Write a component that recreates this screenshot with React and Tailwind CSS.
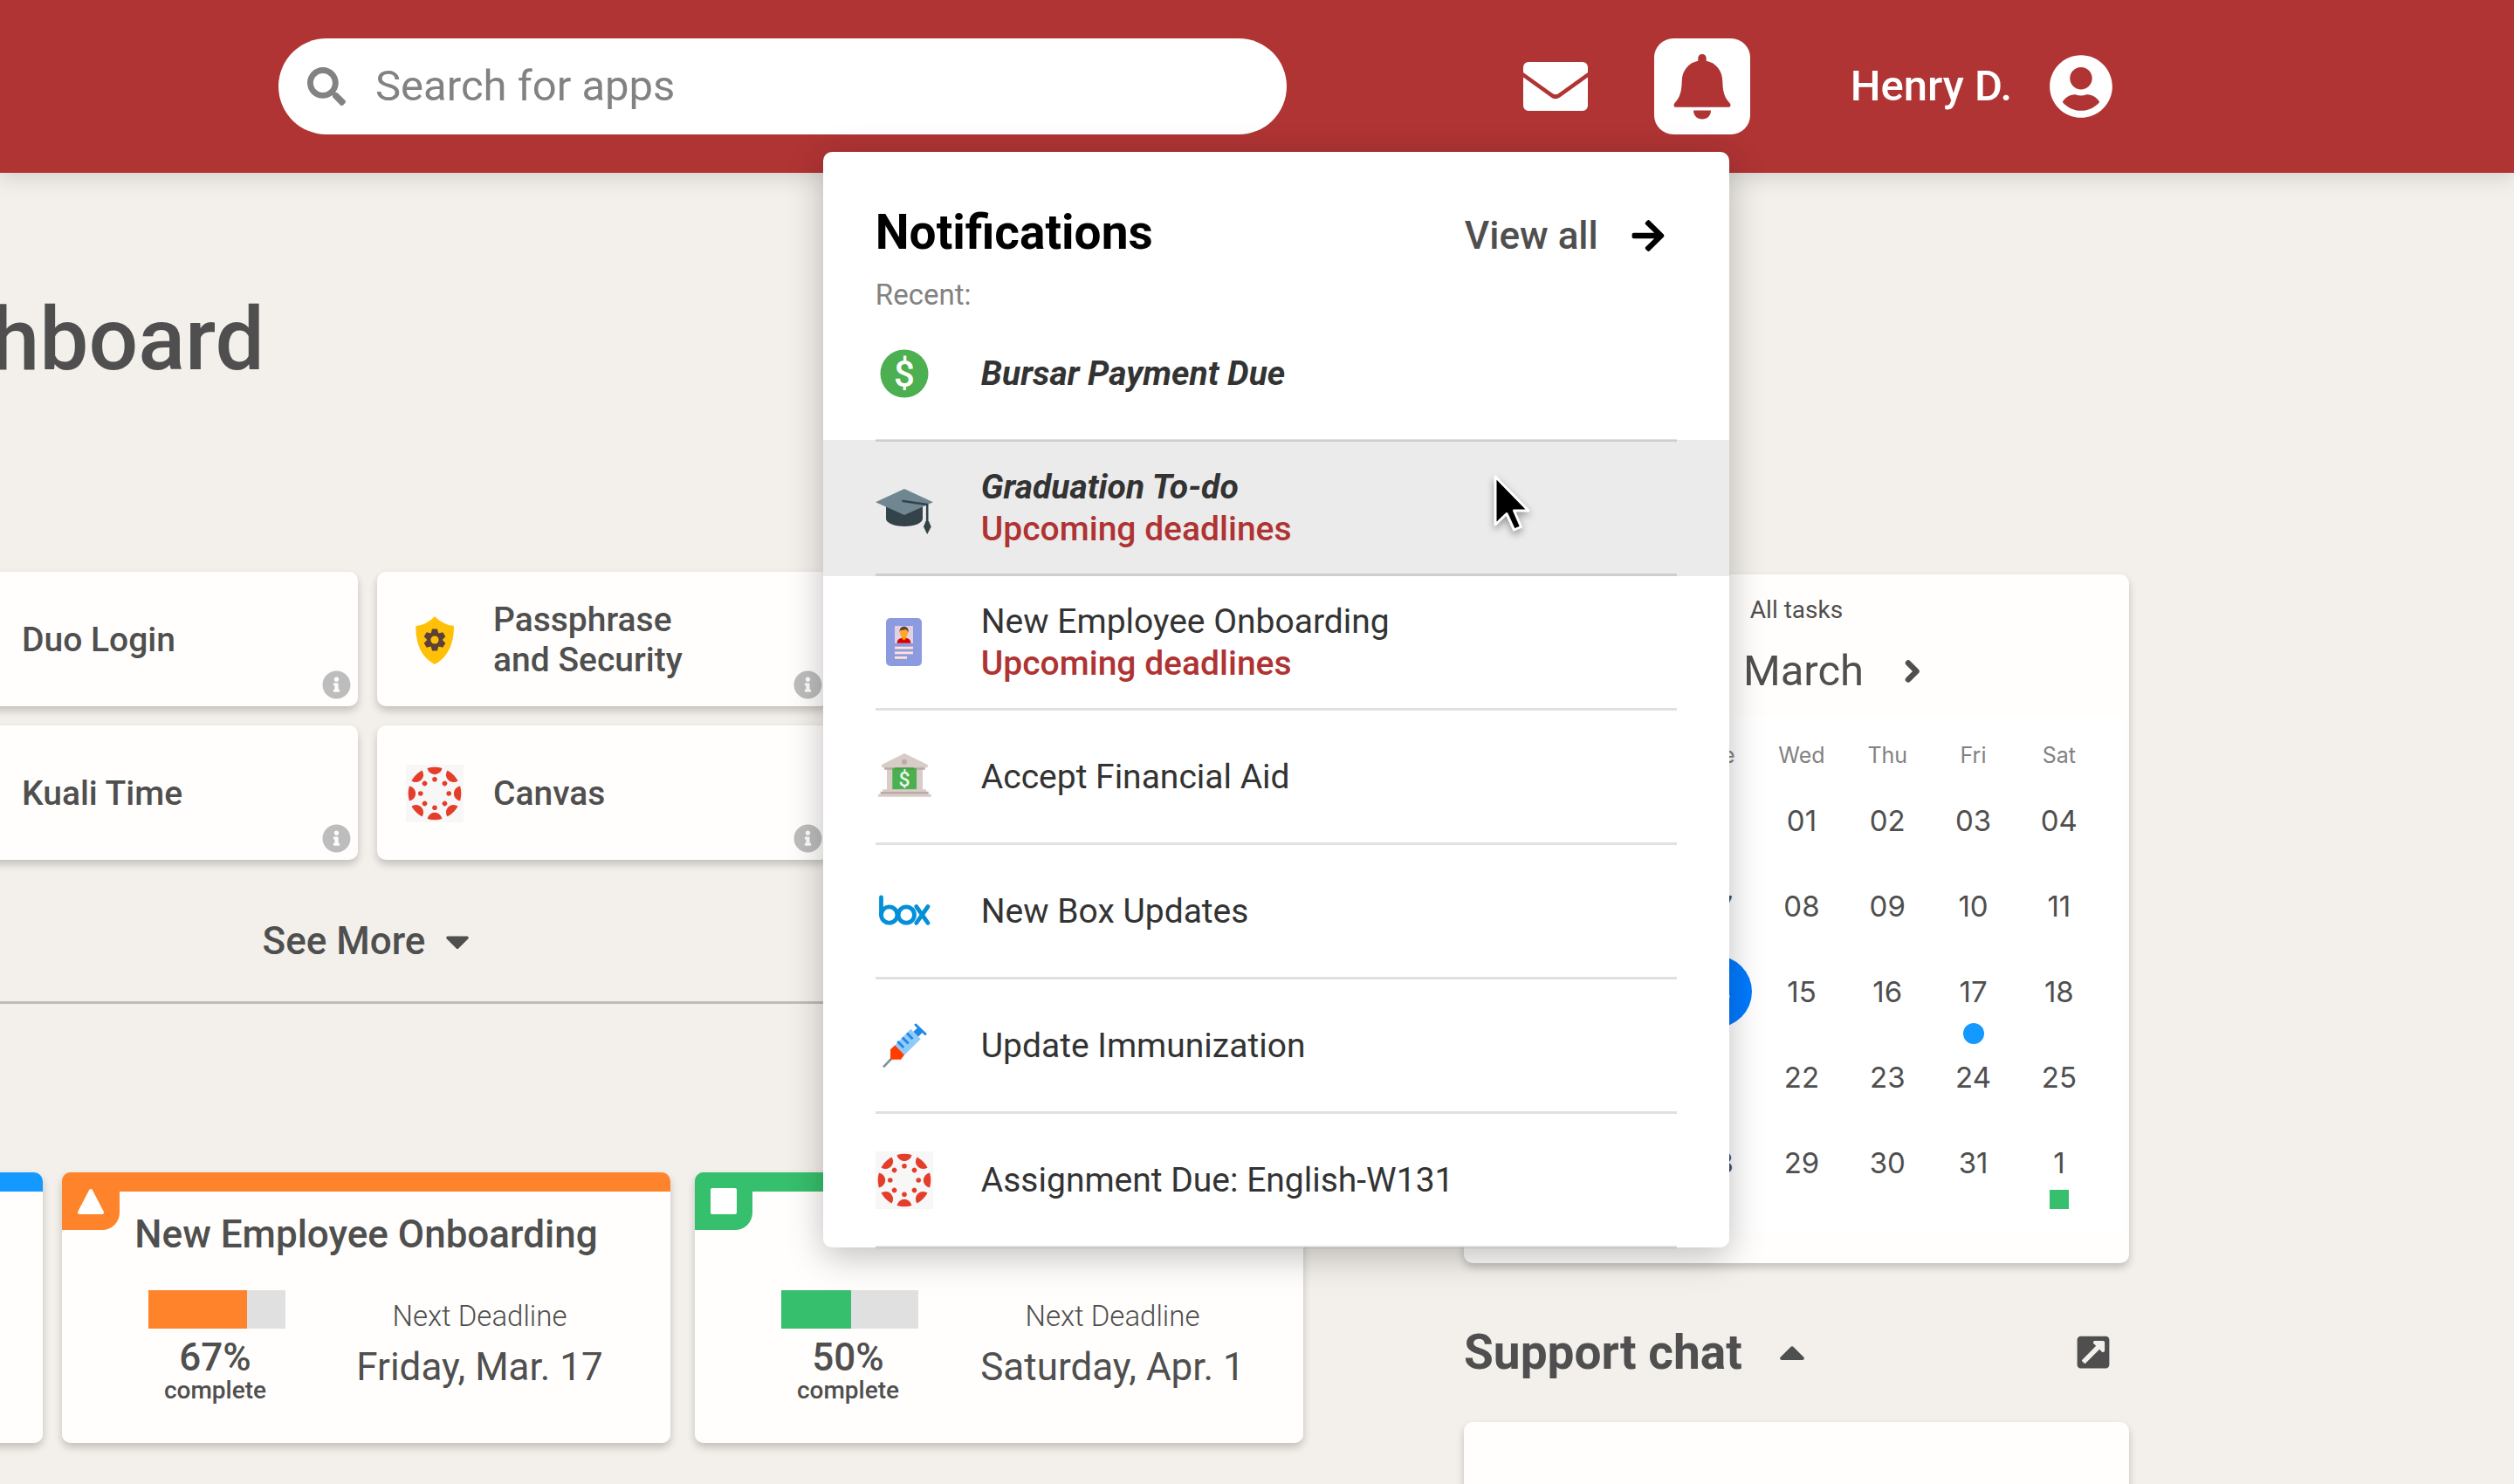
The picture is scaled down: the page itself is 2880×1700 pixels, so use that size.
import React from "react";
import {
  FaSearch,
  FaArrowRight,
  FaUserCircle,
  FaInfoCircle,
  FaCaretDown,
  FaCaretUp,
  FaExternalLinkSquareAlt,
} from "react-icons/fa";

/* ---------- icons ---------- */

function MailIcon() {
  return (
    <svg viewBox="0 0 74 56" className="h-14 w-[74px]" fill="currentColor" aria-hidden="true">
      <path d="M0 12V6a6 6 0 0 1 6-6h62a6 6 0 0 1 6 6v6L40.500 36q-3.500 2.500-7 0z" />
      <path d="M0 17.500 32 40.500q5 3.500 10 0L74 17.500V50a6 6 0 0 1-6 6H6a6 6 0 0 1-6-6z" />
    </svg>
  );
}

function BellIcon() {
  return (
    <svg viewBox="0 0 66 75" className="h-[75px] w-[66px]" fill="currentColor" aria-hidden="true">
      <path d="M33 0c2.700 0 4.700 2 4.700 4.700v3.100C49 10 56 19 56.300 31c.3 11 1.700 16.500 5.700 22 2 2.600 3.500 3.800 3.500 5.400 0 1.500-1 2.400-2.700 2.400H3.200c-1.700 0-2.700-.9-2.700-2.400 0-1.600 1.500-2.800 3.500-5.400 4-5.500 5.400-11 5.700-22C10 19 17 10 28.300 7.800V4.700C28.300 2 30.300 0 33 0z" />
      <path d="M23 64.500h20C43 70.500 38.800 74.500 33 74.500S23 70.500 23 64.500z" />
    </svg>
  );
}

function ChevronIcon({ flip }) {
  return (
    <svg
      viewBox="0 0 20 30"
      className={flip ? "h-[30px] w-5 rotate-180" : "h-[30px] w-5"}
      fill="none"
      stroke="currentColor"
      strokeWidth="6.500"
      strokeLinecap="round"
      strokeLinejoin="round"
      aria-hidden="true"
    >
      <path d="M5 5.500 14.500 15 5 24.500" />
    </svg>
  );
}

function MoneyIcon() {
  return (
    <svg viewBox="0 0 66 66" className="size-[66px] shrink-0" aria-hidden="true">
      <circle cx="33" cy="33" r="27.500" fill="#4caf50" />
      <text x="33" y="48" textAnchor="middle" fill="#fff" fontFamily="Roboto, sans-serif" fontWeight="500" fontSize="42">$</text>
    </svg>
  );
}

function GraduationIcon() {
  return (
    <svg viewBox="0 0 66 66" className="size-[66px] shrink-0" aria-hidden="true">
      <path d="M12 30h42v15c0 5-9 9-21 9s-21-4-21-9z" fill="#34434a" />
      <path d="M33 11 66 26.300 33 41 0 26.300z" fill="#708690" />
      <path d="M31.500 25 59.200 29v21" fill="none" stroke="#34434a" strokeWidth="2.600" strokeLinecap="round" strokeLinejoin="round" />
      <path d="M57.500 48h3.500l2.700 6.500L59.200 63 55 54.500z" fill="#34434a" />
    </svg>
  );
}

function BadgeIcon() {
  return (
    <svg viewBox="0 0 66 66" className="size-[66px] shrink-0" aria-hidden="true">
      <rect x="12" y="5" width="41" height="55" rx="5" fill="#8c9ae0" />
      <rect x="22" y="14" width="21" height="20" fill="#e1d1e2" />
      <path d="M24.700 33.700c0-4 3-6.200 7.800-6.200s7.800 2.200 7.800 6.200z" fill="#d50000" />
      <path d="M30 25h5.200v3.500l-2.600 2-2.600-2z" fill="#ff9800" />
      <ellipse cx="32.600" cy="21.500" rx="4.600" ry="5.600" fill="#ffa726" />
      <path d="M27.700 21.500c-.4-4.500 1.600-6.700 5-6.700s5.400 2.200 5 6.700c-.8-2-2-3-3.500-3.600-1.700 1-4.700.8-5.500 1.200-.6.600-.8 1.300-1 2.400z" fill="#5d4037" />
      <path d="M22 37.700h21v2.700H22zM22 43.400h21v2.800H22zM22 49h14v2.800H22z" fill="#ffe3d6" />
    </svg>
  );
}

function BankIcon() {
  return (
    <svg viewBox="0 0 66 66" className="size-[66px] shrink-0" aria-hidden="true">
      <path d="M13 24h41v24H13z" fill="#d7ccc8" />
      <path d="M10 22h46.700v2.700H10z" fill="#bcaaa4" />
      <path d="M33 6 59.700 19v3.300H7V19z" fill="#d7ccc8" />
      <circle cx="33" cy="15.700" r="3" fill="#bcaaa4" />
      <path d="M19.300 23H47v24.500H19.300z" fill="#4caf50" />
      <path d="M22 22.300h22v2.400H22z" fill="#43a047" />
      <text x="33" y="44" textAnchor="middle" fill="#e8f5e9" fontFamily="Roboto, sans-serif" fontWeight="500" fontSize="23">$</text>
      <path d="M8.300 47.300H58v2.500H8.300zM3 52.700h60.700v3H3z" fill="#d7ccc8" />
      <path d="M5.700 49.700h55v3h-55z" fill="#bcaaa4" />
    </svg>
  );
}

function BoxIcon() {
  return (
    <svg viewBox="0 0 66 66" className="size-[66px] shrink-0" fill="none" stroke="#0490d9" strokeWidth="4.800" strokeLinecap="round" aria-label="box">
      <path d="M6.500 17v20" />
      <circle cx="15.700" cy="37" r="9.200" />
      <circle cx="35.300" cy="37" r="9.200" />
      <path d="M46.700 27.500 60 46.300M60 27.500 46.700 46.300" />
    </svg>
  );
}

function SyringeIcon() {
  return (
    <svg viewBox="0 0 66 66" className="size-[66px] shrink-0" aria-hidden="true">
      <path d="M9 57.300 19 47" stroke="#78909c" strokeWidth="2.600" />
      <path d="m43.300 17 5.400-5.300 5.500 5.600-5.200 5.400z" fill="#1e88e5" />
      <path d="m46 9 11 10.500" stroke="#1e88e5" strokeWidth="3" strokeLinecap="round" />
      <path d="M22.300 32.300 40.300 13.700 51.700 25.300 33 43.800z" fill="#90caf9" />
      <path d="M17 37.300l5.300-5L33 43.500l-4 5.200H17z" fill="#ff3d00" />
      <path d="m25.200 28 7 7m-1.500-11.500 7 7M36 18.500l6.500 6.700" stroke="#1e88e5" strokeWidth="2.800" />
    </svg>
  );
}

function CanvasIcon() {
  const angles = [0, 45, 90, 135, 180, 225, 270, 315];
  return (
    <svg viewBox="-33 -33 66 66" className="size-[66px] shrink-0 bg-[#f7f7f7]" fill="#e43e2b" aria-hidden="true">
      {angles.map((a) => (
        <g key={a} transform={`rotate(${a})`}>
          <path d="M-8.500-29.100A30.300 30.300 0 0 1 8.500-29.100A8.600 8.600 0 0 1-8.500-29.100z" />
          <circle cx="0" cy="-16.200" r="2.800" />
        </g>
      ))}
    </svg>
  );
}

function ShieldIcon() {
  return (
    <svg viewBox="0 0 66 66" className="size-[66px] shrink-0" aria-hidden="true">
      <path d="M33 6C27.500 12 19 16.700 11.300 17c0 19 5.200 35 21.700 44 16.500-9 22-25 22-44C47 16.700 38.500 12 33 6z" fill="#ffc107" />
      <g fill="#5d4037">
        {[0, 60, 120].map((a) => (
          <path key={a} d="M30 20.500h6l1.500 6v13l-1.500 6h-6l-1.500-6v-13z" transform={`rotate(${a} 33 33)`} />
        ))}
        <circle cx="33" cy="33" r="9" />
      </g>
      <circle cx="33" cy="33" r="4.600" fill="#ffc107" />
    </svg>
  );
}

function Cursor() {
  return (
    <svg
      viewBox="0 0 48 72"
      className="pointer-events-none absolute top-[367px] left-[766px] h-[72px] w-12 drop-shadow-[0_4px_4px_rgba(0,0,0,0.35)]"
      aria-hidden="true"
    >
      <path d="M4 5v55l13-12.500L25.500 66l8-3.500L25.500 44H42z" fill="#000" stroke="#fff" strokeWidth="3" strokeLinejoin="round" />
    </svg>
  );
}

/* ---------- notifications ---------- */

const notifications = [
  { title: "Bursar Payment Due", Icon: MoneyIcon, unread: true },
  { title: "Graduation To-do", Icon: GraduationIcon, unread: true, note: true, active: true },
  { title: "New Employee Onboarding", Icon: BadgeIcon, note: true },
  { title: "Accept Financial Aid", Icon: BankIcon },
  { title: "New Box Updates", Icon: BoxIcon },
  { title: "Update Immunization", Icon: SyringeIcon },
  { title: "Assignment Due: English-W131", Icon: CanvasIcon },
];

function NotificationsPanel() {
  return (
    <section
      aria-label="Notifications"
      className="absolute top-[130px] right-6 w-[1038px] rounded-[10px] bg-white pt-[60px] text-[#333] shadow-[0_10px_40px_rgba(0,0,0,0.25)]"
    >
      <div className="flex items-baseline justify-between pr-[72px] pl-[60px]">
        <h2 className="text-[55px] leading-[64px] font-bold text-black">Notifications</h2>
        <a href="#all" className="flex items-center gap-9 text-[44px] leading-[52px] font-medium text-[#4f4f4f]">
          View all
          <FaArrowRight className="size-[42px] text-black" />
        </a>
      </div>
      <p className="mt-7 px-[60px] text-[33px] leading-6 text-[#828282]">Recent:</p>
      <ul className="mt-0.5 -mb-px">
        {notifications.map(({ title, Icon, unread, note, active }) => (
          <li key={title} className={active ? "relative -mt-0.5 bg-black/8 px-[60px] pt-0.5" : "px-[60px]"}>
            <a href="#notification" className="flex h-[154px] items-center gap-[55px] border-b-[3px] border-black/12">
              <Icon />
              <span className="flex flex-col text-[39px] leading-[48px]">
                <span className={unread ? "font-bold italic" : ""}>{title}</span>
                {note && <span className="font-medium text-[#b03333]">Upcoming deadlines</span>}
              </span>
            </a>
          </li>
        ))}
      </ul>
      <Cursor />
    </section>
  );
}

/* ---------- header ---------- */

function Header() {
  return (
    <header className="relative z-10 flex h-[198px] items-center bg-[#b03434] pr-[459px] pl-[319px] shadow-[0_4px_24px_rgba(0,0,0,0.15)]">
      <label className="flex h-[110px] flex-1 items-center gap-[34px] rounded-full bg-white pl-[33px]">
        <FaSearch className="size-11 shrink-0 text-[#828282]" />
        <input
          type="search"
          aria-label="Search for apps"
          placeholder="Search for apps"
          className="min-w-0 flex-1 bg-transparent text-[49px] text-[#4f4f4f] outline-none placeholder:text-[#828282]"
        />
      </label>
      <button type="button" aria-label="Messages" className="ml-[271px] text-white">
        <MailIcon />
      </button>
      <div className="relative ml-[76px]">
        <button type="button" aria-label="Notifications" className="flex size-[110px] items-center justify-center rounded-[22px] bg-white text-[#b03434]">
          <BellIcon />
        </button>
        <NotificationsPanel />
      </div>
      <button type="button" className="ml-[115px] flex items-center gap-[42px] text-[49px] font-medium text-white">
        Henry D.
        <FaUserCircle className="size-[74px]" />
      </button>
    </header>
  );
}

/* ---------- left column ---------- */

const apps = [
  [
    { name: "One.IU" },
    { name: "Duo Login" },
    { name: "Passphrase and Security", Icon: ShieldIcon },
    { name: "Outlook" },
  ],
  [
    { name: "Student Center" },
    { name: "Kuali Time" },
    { name: "Canvas", Icon: CanvasIcon },
    { name: "Zoom" },
  ],
];

function AppTile({ name, Icon }) {
  return (
    <div className="relative h-[154px] w-[518px] shrink-0 rounded-[10px] bg-[#fffefc] shadow-[0_5px_10px_rgba(0,0,0,0.2)]">
      <a href="#app" className="flex h-full items-center gap-[34px] pt-0.5 pr-[120px] pl-[33px] text-[39px] leading-[46px] font-medium text-[#4f4f4f]">
        {Icon ? <Icon /> : <span className="size-[66px] shrink-0" />}
        <span>{name}</span>
      </a>
      <button type="button" aria-label={"About " + name} className="absolute right-2 bottom-2 text-[#bdbdbd]">
        <FaInfoCircle className="size-[33px]" />
      </button>
    </div>
  );
}

const tones = {
  blue: "bg-[#1399ff]",
  orange: "bg-[#ff832b]",
  green: "bg-[#36bf6c]",
};

function TaskCard({ title, tone, shape, percent, fill, date }) {
  return (
    <article className="relative min-w-0 flex-1 overflow-hidden rounded-[10px] bg-[#fffefc] text-[#4f4f4f]">
      <div className={"h-[22px] " + tones[tone]} />
      <div className={"absolute top-0 left-0 flex size-[66px] items-center justify-center rounded-br-[20px] " + tones[tone]}>
        <svg viewBox="0 0 30 30" className="size-[30px]" fill="#fff" stroke="#fff" strokeWidth="4" strokeLinejoin="round" aria-hidden="true">
          {shape === "triangle" && <path d="M15 3 28 28H2z" />}
          {shape === "square" && <path d="M2 2h26v26H2z" />}
          {shape === "circle" && <circle cx="15" cy="15" r="12" />}
        </svg>
      </div>
      <h3 className="mt-[23px] text-center text-[44px] leading-[52px] font-medium whitespace-nowrap">{title}</h3>
      <div className="mt-[38px] flex gap-1 pb-[46px] pl-[99px]">
        <div className="w-[157px] text-center font-medium">
          <div className="h-11 bg-[#e0e0e0]">
            <div className={"h-full " + tones[tone]} style={{ width: fill + "%" }} />
          </div>
          <p className="mt-[9px] pr-1 text-[44px] leading-[48px]">{percent}%</p>
          <p className="pr-1 text-[28px] leading-7">complete</p>
        </div>
        <div className="flex-1 pt-[10px] text-center">
          <p className="text-[33px] leading-10 font-light">Next Deadline</p>
          <p className="mt-3 text-[44px] leading-[52px]">{date}</p>
        </div>
      </div>
    </article>
  );
}

function LeftColumn() {
  const card = "flex min-w-0 rounded-[10px] shadow-[0_5px_10px_rgba(0,0,0,0.2)]";
  return (
    <div className="min-w-0 flex-1">
      <h1 className="pl-[471px] text-[100px] leading-[120px] font-medium text-[#4f4f4f]">Dashboard</h1>
      <div className="mt-[206px] mr-[3px] flex flex-col gap-[22px]">
        {apps.map((row, i) => (
          <div key={i} className="flex justify-end gap-[22px]">
            {row.map((app) => (
              <AppTile key={app.name} {...app} />
            ))}
          </div>
        ))}
      </div>
      <button type="button" className="mx-auto mt-[67px] flex items-center gap-[15px] pl-[6px] text-[44px] leading-[52px] font-medium text-[#4f4f4f]">
        See More
        <FaCaretDown className="size-11" />
      </button>
      <hr className="mt-[43px] border-t-[3px] border-[#bdbdbd]" />
      <div className="mt-[193px] flex gap-[22px]">
        <div className={card + " w-[701px]"}>
          <TaskCard title="Enrollment" tone="blue" shape="circle" percent="33" fill={33} date="Friday, Mar. 17" />
        </div>
        <div className="flex min-w-0 flex-1 gap-7">
          <div className={card + " flex-1"}>
            <TaskCard title="New Employee Onboarding" tone="orange" shape="triangle" percent="67" fill={72} date="Friday, Mar. 17" />
          </div>
          <div className={card + " flex-1"}>
            <TaskCard title="Graduation To-do" tone="green" shape="square" percent="50" fill={51} date="Saturday, Apr. 1" />
          </div>
        </div>
      </div>
    </div>
  );
}

/* ---------- right column ---------- */

const weekdays = ["Sun", "Mon", "Tue", "Wed", "Thu", "Fri", "Sat"];
const weeks = [
  ["", "", "", "01", "02", "03", "04"],
  ["05", "06", "07", "08", "09", "10", "11"],
  ["12", "13", "14", "15", "16", "17", "18"],
  ["19", "20", "21", "22", "23", "24", "25"],
  ["26", "27", "28", "29", "30", "31", "1"],
];

function Day({ day }) {
  if (day === "14") {
    return <span className="mx-auto flex size-[82px] items-center justify-center rounded-full bg-[#007aff] text-white">14</span>;
  }
  return (
    <span className="relative inline-block">
      {day}
      {day === "17" && <span className="absolute top-full left-1/2 mt-4 size-6 -translate-x-1/2 rounded-full bg-[#1399ff]" />}
      {day === "1" && <span className="absolute top-full left-1/2 mt-[11px] size-[22px] -translate-x-1/2 bg-[#36bf6c]" />}
    </span>
  );
}

function Calendar() {
  return (
    <section className="rounded-[10px] bg-[#fffefc] px-2 pt-[25px] pb-9 text-[#4f4f4f] shadow-[0_5px_10px_rgba(0,0,0,0.2)]">
      <p className="text-center text-[28px] leading-8">All tasks</p>
      <div className="mt-[26px] flex items-center justify-center gap-[46px] pl-4">
        <button type="button" aria-label="Previous month">
          <ChevronIcon flip />
        </button>
        <h2 className="text-[49px] leading-[56px]">March</h2>
        <button type="button" aria-label="Next month">
          <ChevronIcon />
        </button>
      </div>
      <div className="mt-[22px] bg-white pt-[22px] pr-[23px] pb-[30px] pl-[35px]">
        <table className="w-full table-fixed text-center font-[Inter,sans-serif]">
          <thead>
            <tr className="h-[50px] text-[25px] text-[#828282]">
              {weekdays.map((d) => (
                <th key={d} scope="col" className="p-0 font-normal">{d}</th>
              ))}
            </tr>
          </thead>
          <tbody className="text-[33px] leading-10">
            {weeks.map((week, i) => (
              <tr key={i} className="h-[98px]">
                {week.map((day, j) => (
                  <td key={j} className="p-0">{day && <Day day={day} />}</td>
                ))}
              </tr>
            ))}
          </tbody>
        </table>
      </div>
    </section>
  );
}

function RightColumn() {
  return (
    <aside className="w-[762px] shrink-0 pt-[329px]">
      <Calendar />
      <div className="mt-[70px] flex items-center justify-between pr-5 text-[#4f4f4f]">
        <h2>
          <button type="button" className="flex items-center gap-[33px] text-[55px] leading-[64px] font-bold">
            Support chat
            <FaCaretUp className="size-12" />
          </button>
        </h2>
        <a href="#chat" aria-label="Open support chat">
          <FaExternalLinkSquareAlt className="size-[42px]" />
        </a>
      </div>
      <div className="mt-12 h-[600px] rounded-[10px] bg-[#fffefc] shadow-[0_5px_10px_rgba(0,0,0,0.2)]" />
    </aside>
  );
}

export default function App() {
  return (
    <div className="h-screen overflow-hidden bg-[#f3f0eb] font-[Roboto,sans-serif]">
      <Header />
      <main className="-ml-[652px] flex gap-[184px] pt-[131px] pr-[441px]">
        <LeftColumn />
        <RightColumn />
      </main>
    </div>
  );
}
